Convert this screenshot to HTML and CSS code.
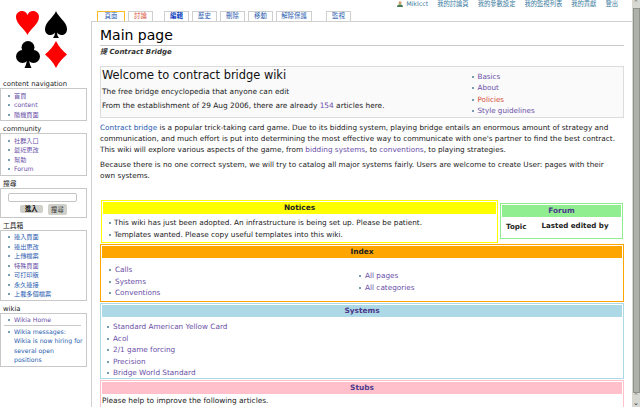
FILE: index.html
```html
<!DOCTYPE html>
<html lang="en">
<head>
<meta charset="utf-8">
<title>Main page</title>
<link rel="stylesheet" href="styles.css">
</head>
<body>
<div class="page">
  <aside class="side">
    <div class="logo">
      <svg viewBox="0 0 60 62" width="60" height="62" aria-label="Card suits">
        <path fill="#ff0000" d="M15.500 26C13 20 4 15 4 8C4 4.500 6.800 2 10 2C12.500 2 14.500 3.500 15.500 6C16.500 3.500 18.500 2 21 2C24.200 2 27 4.500 27 8C27 15 18 20 15.500 26Z"/>
        <path fill="#000000" d="M44 2C46 8 55 13 55 20C55 24 52.500 26 49.500 26C47.500 26 46 25 45 23.500C45.200 26 45.800 27.500 47 29L41 29C42.200 27.500 42.800 26 43 23.500C42 25 40.500 26 38.500 26C35.500 26 33 24 33 20C33 13 42 8 44 2Z"/>
        <g fill="#000000">
          <circle cx="16" cy="38.500" r="6.500"/>
          <circle cx="10.500" cy="47.500" r="6.500"/>
          <circle cx="21.500" cy="47.500" r="6.500"/>
          <path d="M13 40L19 40L19 48L16.800 48C17 52 17.800 56 19.500 59L12.500 59C14.200 56 15 52 15.200 48L13 48Z"/>
        </g>
        <path fill="#ff0000" d="M44 32C47 38 51 42 55 45.500C51 49 47 53 44 59C41 53 37 49 33 45.500C37 42 41 38 44 32Z"/>
      </svg>
    </div>
    <h5>content navigation</h5>
    <div class="box"><ul>
      <li><a class="v">首頁</a></li>
      <li><a class="v">content</a></li>
      <li><a class="v">隨機頁面</a></li>
    </ul></div>
    <h5>community</h5>
    <div class="box"><ul>
      <li><a class="v">社群入口</a></li>
      <li><a class="v">最近更改</a></li>
      <li><a class="v">幫助</a></li>
      <li><a class="v">Forum</a></li>
    </ul></div>
    <h5>搜尋</h5>
    <div class="box search">
      <div class="field"></div>
      <div class="btns"><span class="btn on">進入</span><span class="btn">搜尋</span></div>
    </div>
    <h5>工具箱</h5>
    <div class="box"><ul>
      <li><a>連入頁面</a></li>
      <li><a>連出更改</a></li>
      <li><a>上傳檔案</a></li>
      <li><a class="v">特殊頁面</a></li>
      <li><a>可打印版</a></li>
      <li><a>永久連接</a></li>
      <li><a>上載多個檔案</a></li>
    </ul></div>
    <h5>wikia</h5>
    <div class="box"><ul class="before-rule">
      <li><a class="v">Wikia Home</a></li>
    </ul>
    <hr class="rule">
    <ul class="after-rule">
      <li><a>Wikia messages:<br>Wikia is now hiring for several open positions</a></li>
    </ul></div>
  </aside>
  <div class="main">
    <nav class="personal">
      <a><svg class="user" viewBox="0 0 8 8" width="6" height="6"><circle cx="4" cy="2.200" r="2" fill="#c8a060"/><path d="M0 8c0-3 2-3.500 4-3.500S8 5 8 8z" fill="#4a7a50"/></svg>Miklcct</a>
      <a>我的討論頁</a><a>我的參數設定</a><a>我的監視列表</a><a>我的貢獻</a><a>登出</a>
    </nav>
    <nav class="tabs">
      <a class="tab sel">頁面</a><a class="tab new">討論</a>
      <a class="tab first strong">編輯</a><a class="tab">歷史</a><a class="tab">刪除</a><a class="tab">移動</a><a class="tab long">解除保護</a>
      <a class="tab last">監視</a>
    </nav>
    <main class="content">
      <h1>Main page</h1>
      <div class="sub">提 Contract Bridge</div>
      <section class="welcome">
        <div class="w-left">
          <h2>Welcome to contract bridge wiki</h2>
          <p>The free bridge encyclopedia that anyone can edit</p>
          <p>From the establishment of 29 Aug 2006, there are already <a class="v">154</a> articles here.</p>
        </div>
        <ul class="w-right">
          <li><a class="v">Basics</a></li>
          <li><a class="v">About</a></li>
          <li><a class="red">Policies</a></li>
          <li><a class="v">Style guidelines</a></li>
        </ul>
      </section>
      <p class="para"><a>Contract bridge</a> is a popular trick-taking card game. Due to its bidding system, playing bridge entails an enormous amount of strategy and communication, and much effort is put into determining the most effective way to communicate with one's partner to find the best contract. This wiki will explore various aspects of the game, from <a class="v">bidding systems</a>, to <a class="v">conventions</a>, to playing strategies.</p>
      <p class="para">Because there is no one correct system, we will try to catalog all major systems fairly. Users are welcome to create User: pages with their own systems.</p>
      <div class="row">
        <section class="panel notices">
          <h3 class="yellow">Notices</h3>
          <ul class="list tight">
            <li>This wiki has just been adopted. An infrastructure is being set up. Please be patient.</li>
            <li>Templates wanted. Please copy useful templates into this wiki.</li>
          </ul>
        </section>
        <section class="panel forum">
          <h3 class="green"><a class="v dark">Forum</a></h3>
          <div class="forum-row"><b class="topic">Topic</b><b class="edited">Lasted edited by</b></div>
        </section>
      </div>
      <section class="panel index">
        <h3 class="orange">Index</h3>
        <div class="cols">
          <ul class="list"><li><a class="v">Calls</a></li><li><a class="v">Systems</a></li><li><a class="v">Conventions</a></li></ul>
          <ul class="list"><li><a class="v">All pages</a></li><li><a class="v">All categories</a></li></ul>
        </div>
      </section>
      <section class="panel systems">
        <h3 class="blue"><a class="v dark">Systems</a></h3>
        <ul class="list sys">
          <li><a class="v">Standard American Yellow Card</a></li>
          <li><a class="v">Acol</a></li>
          <li><a class="v">2/1 game forcing</a></li>
          <li><a class="v">Precision</a></li>
          <li><a class="v">Bridge World Standard</a></li>
        </ul>
      </section>
      <section class="panel stubs">
        <h3 class="pink"><a class="v dark">Stubs</a></h3>
        <p class="help">Please help to improve the following articles.</p>
      </section>
    </main>
  </div>
  <div class="scrollbar" aria-hidden="true">
    <span class="arrow">⌃</span>
    <div class="thumb"></div>
    <span class="arrow">⌃</span>
    <span class="arrow down">⌄</span>
  </div>
</div>
</body>
</html>
```
FILE: styles.css
```css
* { box-sizing: border-box; }
html, body { margin: 0; height: 407px; overflow: hidden; background: #fff; }
body { font: 7.400px/11px "DejaVu Sans", "Noto Sans CJK TC", sans-serif; color: #222; }
a { color: #2a5db0; text-decoration: none; }
a.v { color: #6a4fa8; }
a.red { color: #d8503c; }
a.dark { color: #4b3a8c; }
ul { list-style: none; margin: 0; padding: 0; }

.page { display: flex; width: 640px; height: 407px; overflow: hidden; }
.side { width: 91px; flex: none; }
.main { width: 541px; flex: none; display: flex; flex-direction: column; }

.logo { height: 80px; padding: 9px 0 0 12px; }
.logo svg { display: block; }

.side h5 { margin: 0 0 0 3px; font-size: 6.800px; font-weight: normal; line-height: 8px; color: #222; }
.box { width: 87px; margin: 0 0 4px 0; padding: 0 3px; border: 1px solid #c8c8c8; background: #fff; }
.box ul { padding: 1.500px 0 1px 0; }
.box li { font-size: 6.200px; line-height: 9.500px; padding-left: 10px; position: relative; }
.box li::before, .list li::before, .w-right li::before {
  content: ""; position: absolute; width: 2px; height: 2px; background: #4d7c96; border-radius: 1px;
}
.box li::before { left: 4px; top: 4px; }
.box .before-rule { padding-bottom: 0; }
.box .after-rule { padding-top: 1px; }
.rule { border: 0; height: 1px; background: #c8c8c8; margin: 0 2px 0 0; }

.search { height: 30px; padding: 4px 3px 0 3px; }
.field { width: 69px; height: 9px; margin-left: 4px; border: 1px solid #c4c4c4; border-radius: 2px; background: #fff; }
.btns { display: flex; gap: 5px; margin: 2px 0 0 16px; align-items: center; }
.btn { font-size: 6.300px; line-height: 11px; height: 11px; padding: 0 3.500px; border-radius: 2px; background: #d0d0ca; color: #333; }
.btn.on { background: #d0d0ca; font-weight: bold; color: #111; padding: 0 5px; height: 8px; line-height: 8px; }

.personal { display: flex; justify-content: flex-end; gap: 9px; height: 9px; padding-right: 14px; font-size: 6.300px; line-height: 8px; }
.personal a { color: #3a7ca0; }
.user { margin-right: 3px; vertical-align: -1px; }

.tabs { display: flex; height: 13px; padding-left: 6px; margin-top: 2px; gap: 3px; position: relative; z-index: 1; }
.tab { height: 10px; width: 25px; border: 1px solid #cfcfcf; border-bottom: 0; font-size: 6.400px; line-height: 8px; color: #2a5db0; background: #fff; text-align: center; }
.tab.sel { border-color: #fabd23; width: 28px; }
.tab.new { color: #d8503c; }
.tab.first { margin-left: 8px; }
.tab.last { margin-left: 11px; }
.tab.long { width: 36px; }
.tab.strong { font-weight: bold; color: #0a3cc0; }

.content { flex: 1; margin-top: -3px; padding: 0 8px; border: 1px solid #d0d0d0; border-right: 0; border-bottom: 0; overflow: hidden; background: #fff; }
h1 { margin: 0; padding-top: 4px; height: 24px; font-size: 14px; line-height: 19px; font-weight: normal; color: #000; border-bottom: 1px solid #c8c8c8; }
.sub { font-size: 7px; line-height: 10px; font-weight: bold; font-style: italic; margin: 1px 0 0 0; color: #333; }

.welcome { display: flex; height: 52px; margin: 9px 0 0 0; border: 1px solid #dcdcdc; background: #fafafa; }
.w-left { width: 371px; padding-left: 1px; }
.w-left h2 { margin: 0; font-size: 11.400px; line-height: 16px; font-weight: normal; color: #111; }
.w-left p { margin: 3px 0 0 0; }
.w-right { padding-top: 3.500px; }
.w-right li { position: relative; padding-left: 5.500px; line-height: 11.500px; font-size: 7.200px; }
.w-right li::before { left: 0; top: 5px; }

.para { margin: 0; font-size: 7.300px; max-width: 519px; }
.welcome + .para { margin-top: 3.500px; }
.para + .para { margin-top: 4px; }

.row { display: flex; gap: 2px; margin: 19.500px 0 0 1px; align-items: flex-start; }
.panel { border: 1px solid; background: #fff; }
.panel h3 { margin: 1px; height: 12px; font-size: 7.400px; line-height: 12px; font-weight: bold; text-align: center; color: #222; }
.notices { width: 397px; height: 43px; border-color: #ffff00; }
.forum { width: 123px; height: 36px; margin-top: 3px; border-color: #90ee90; padding: 1px; }
.panel.forum h3 { margin: 0; background: #90ee90; }
.forum-row { display: flex; padding: 4px 0 0 4px; font-size: 7.100px; line-height: 10px; }
.topic { margin-top: 1px; }
.edited { margin-left: 15px; }
.yellow { background: #ffff00; }
.orange { background: #ffa500; }
.blue { background: #add8e6; }
.pink { background: #ffc0cb; }

.list li { position: relative; font-size: 7.300px; line-height: 11.500px; padding-left: 12px; }
.list li::before { left: 7px; top: 5px; }
.tight { padding-top: 2px; }

.index { height: 58px; margin-top: 1px; border-color: #ffa500; }
.cols { display: flex; padding-top: 1px; }
.cols ul { width: 250px; padding-top: 4px; }
.cols ul + ul { padding-top: 10px; }
.cols li { padding-left: 14px; }
.cols li::before { left: 8px; }
.systems { height: 76px; margin-top: 1px; border-color: #add8e6; }
.sys { padding-top: 3px; }
.sys li::before { left: 6px; }
.stubs { height: 60px; margin-top: 1px; border-color: #ffc0cb; }
.help { margin: 0 0 0 1px; }

.scrollbar { width: 8px; flex: none; background: #d8d8d2; display: flex; flex-direction: column; align-items: center; font-size: 7px; line-height: 7px; color: #444; }
.arrow { height: 7px; color: #777; }
.arrow.down { color: #222; }
.thumb { width: 7px; height: 385px; margin-top: 1px; background: #aeb0aa; border: 1px solid #90928c; }
```
